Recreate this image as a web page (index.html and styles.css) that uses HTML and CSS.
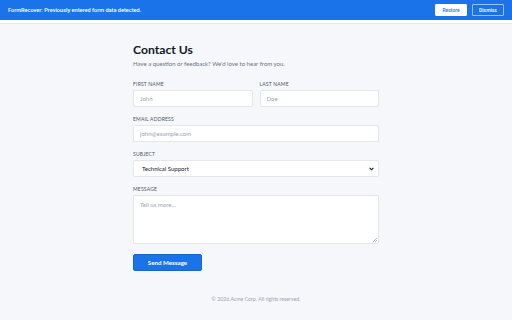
FILE: index.html
```html
<!DOCTYPE html>
<html lang="en">
<head>
    <meta charset="UTF-8">
    <meta name="viewport" content="width=device-width, initial-scale=1.0">
    <title>Contact Us</title>
    <link rel="stylesheet" href="styles.css">
</head>
<body>

<div class="recover-bar">
    <span class="recover-text">FormRecover: Previously entered form data detected.</span>
    <div class="recover-actions">
        <button type="button" class="btn-restore">Restore</button>
        <button type="button" class="btn-dismiss">Dismiss</button>
    </div>
</div>
<div class="bar-edge"></div>

<div class="main">
    <h1>Contact Us</h1>
    <p class="intro">Have a question or feedback? We'd love to hear from you.</p>

    <form class="contact-form">
        <div class="row">
            <div class="field">
                <label for="firstName">First Name</label>
                <input type="text" id="firstName" placeholder="John">
            </div>
            <div class="field">
                <label for="lastName">Last Name</label>
                <input type="text" id="lastName" placeholder="Doe">
            </div>
        </div>

        <div class="field">
            <label for="email">Email Address</label>
            <input type="text" id="email" placeholder="john@example.com">
        </div>

        <div class="field">
            <label for="subject">Subject</label>
            <select id="subject">
                <option>Technical Support</option>
                <option>General Inquiry</option>
                <option>Billing</option>
            </select>
        </div>

        <div class="field">
            <label for="message">Message</label>
            <div class="textarea-wrap">
                <textarea id="message" placeholder="Tell us more..."></textarea>
                <svg class="resize-grip" width="4" height="4" viewBox="0 0 4 4">
                    <path d="M4 0L0 4M4 2L2 4" stroke="#9ca3af" stroke-width="0.7"/>
                </svg>
            </div>
        </div>

        <button type="button" class="btn-send">Send Message</button>
    </form>

    <p class="footer">&copy; 2026 Acme Corp. All rights reserved.</p>
</div>

</body>
</html>
```

FILE: styles.css
```css
body {
  margin: 0;
  background: #f5f7fa;
  font-family: Lato, "Noto Sans", sans-serif;
  color: #1f2937;
}

.recover-bar {
  height: 20px;
  background: #1a73e8;
  display: flex;
  align-items: center;
  justify-content: space-between;
  padding: 0 8px;
  font-family: Roboto, "Noto Sans", sans-serif;
}

.recover-text {
  color: #ffffff;
  font-size: 5.6px;
  font-weight: 500;
}

.recover-actions {
  display: flex;
  gap: 5px;
}

.recover-actions button {
  height: 12px;
  width: 32px;
  padding: 0;
  font-family: Roboto, "Noto Sans", sans-serif;
  font-size: 5px;
  font-weight: 500;
  border-radius: 1px;
  cursor: pointer;
}

.btn-restore {
  background: #ffffff;
  color: #1a73e8;
  border: 1px solid #ffffff;
}

.btn-dismiss {
  background: transparent;
  color: #ffffff;
  border: 1px solid rgba(255, 255, 255, 0.55);
}

.bar-edge {
  height: 3px;
  background: #ffffff;
  border-bottom: 1px solid #e6e8ee;
}

.main {
  width: 246px;
  margin: 0 auto;
  padding-top: 18px;
}

h1 {
  margin: 0;
  font-size: 12.2px;
  line-height: 15px;
  font-weight: 700;
  color: #111827;
}

.intro {
  margin: 3px 0 0;
  font-size: 6px;
  line-height: 8px;
  color: #6b7280;
}

.contact-form {
  margin-top: 13px;
  display: flex;
  flex-direction: column;
  gap: 9px;
}

.row {
  display: flex;
  gap: 7px;
}

.row .field {
  flex: 1;
}

.field {
  display: flex;
  flex-direction: column;
}

label {
  font-size: 5px;
  line-height: 7px;
  text-transform: uppercase;
  letter-spacing: 0.2px;
  color: #4b5563;
  margin-bottom: 2px;
}

input[type=text], select, textarea {
  box-sizing: border-box;
  width: 100%;
  border: 1px solid #e3e6eb;
  border-radius: 2px;
  background-color: #ffffff;
  font-family: Lato, "Noto Sans", sans-serif;
  font-size: 6px;
  color: #111827;
  margin: 0;
}

input[type=text] {
  height: 17px;
  padding: 0 6px;
}

select {
  height: 17px;
  padding: 0 8px;
  appearance: none;
  -webkit-appearance: none;
  background-image: url("data:image/svg+xml;utf8,<svg xmlns='http://www.w3.org/2000/svg' width='5' height='4' viewBox='0 0 5 4'><path d='M0.6 0.8L2.5 2.8L4.4 0.8' fill='none' stroke='%23111' stroke-width='1.1'/></svg>");
  background-repeat: no-repeat;
  background-position: right 4px center;
  background-size: 5px 4px;
}

.textarea-wrap {
  position: relative;
  display: flex;
}

textarea {
  height: 49px;
  padding: 5px 6px;
  resize: none;
}

.resize-grip {
  position: absolute;
  right: 2px;
  bottom: 2px;
}

::placeholder {
  color: #9ca3af;
}

.btn-send {
  align-self: flex-start;
  margin-top: 1px;
  width: 69px;
  height: 17px;
  padding: 0;
  background: #1a73e8;
  color: #ffffff;
  border: 1px solid #1565d0;
  border-radius: 2px;
  font-family: Lato, "Noto Sans", sans-serif;
  font-size: 6.2px;
  font-weight: 700;
  cursor: pointer;
}

.footer {
  margin: 25px 0 0;
  text-align: center;
  font-size: 5.2px;
  line-height: 7px;
  color: #9ca3af;
}
```
